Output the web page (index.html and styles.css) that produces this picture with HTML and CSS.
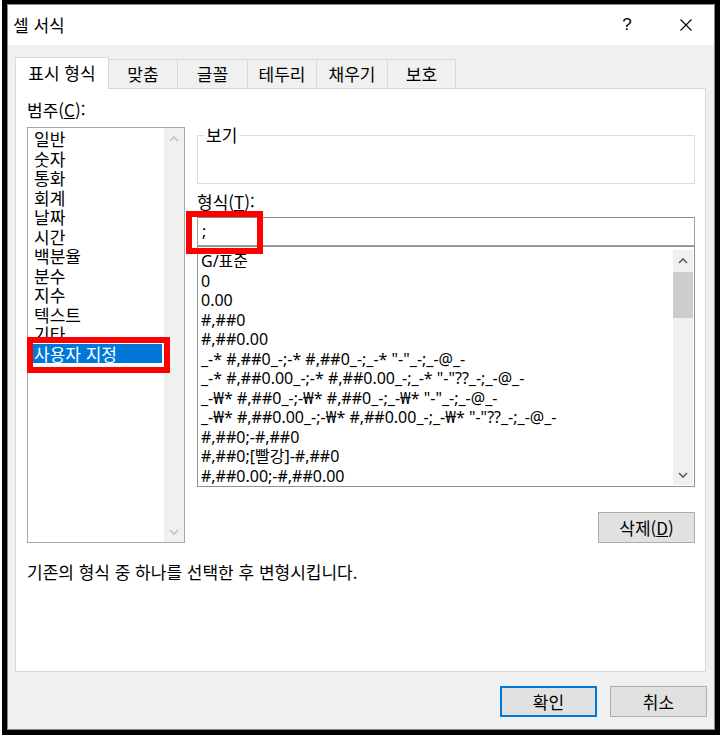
FILE: index.html
```html
<!DOCTYPE html>
<html lang="ko">
<head>
<meta charset="utf-8">
<title>셀 서식</title>
<link rel="stylesheet" href="styles.css">
</head>
<body>
<div class="frame">
  <div class="dialog">
    <div class="titlebar">
      <span class="title">셀 서식</span>
      <div class="tb-buttons">
        <span class="tb-btn help">?</span>
        <span class="tb-btn close">
          <svg width="12" height="12" viewBox="0 0 12 12"><path d="M0.5 0.5 L11.5 11.5 M11.5 0.5 L0.5 11.5" stroke="#000" stroke-width="1.1" fill="none"/></svg>
        </span>
      </div>
    </div>
    <div class="content">
      <div class="tabs">
        <div class="tab active t1">표시 형식</div>
        <div class="tab t2">맞춤</div>
        <div class="tab t3">글꼴</div>
        <div class="tab t4">테두리</div>
        <div class="tab t5">채우기</div>
        <div class="tab t6">보호</div>
      </div>
      <div class="panel">
        <div class="cols">
          <div class="col-left">
            <div class="label">범주(<u>C</u>):</div>
            <div class="listbox cat">
              <ul class="items">
                <li>일반</li>
                <li>숫자</li>
                <li>통화</li>
                <li>회계</li>
                <li>날짜</li>
                <li>시간</li>
                <li>백분율</li>
                <li>분수</li>
                <li>지수</li>
                <li>텍스트</li>
                <li>기타</li>
                <li class="selected">사용자 지정</li>
              </ul>
              <div class="vscroll disabled">
                <span class="arrow"><svg width="10" height="7" viewBox="0 0 10 7"><polyline points="1,6 5,2 9,6" fill="none" stroke="#c2c2c2" stroke-width="1.6"/></svg></span>
                <span class="track"></span>
                <span class="arrow"><svg width="10" height="7" viewBox="0 0 10 7"><polyline points="1,1 5,5 9,1" fill="none" stroke="#c2c2c2" stroke-width="1.6"/></svg></span>
              </div>
            </div>
          </div>
          <div class="col-right">
            <fieldset class="preview">
              <legend>보기</legend>
              <div class="preview-body"></div>
            </fieldset>
            <div class="label fmt-label">형식(<u>T</u>):</div>
            <div class="input">;</div>
            <div class="listbox fmt">
              <ul class="items latin">
                <li>G/표준</li>
                <li>0</li>
                <li>0.00</li>
                <li>#,##0</li>
                <li>#,##0.00</li>
                <li>_-* #,##0_-;-* #,##0_-;_-* "-"_-;_-@_-</li>
                <li>_-* #,##0.00_-;-* #,##0.00_-;_-* "-"??_-;_-@_-</li>
                <li>_-₩* #,##0_-;-₩* #,##0_-;_-₩* "-"_-;_-@_-</li>
                <li>_-₩* #,##0.00_-;-₩* #,##0.00_-;_-₩* "-"??_-;_-@_-</li>
                <li>#,##0;-#,##0</li>
                <li>#,##0;[빨강]-#,##0</li>
                <li>#,##0.00;-#,##0.00</li>
              </ul>
              <div class="vscroll">
                <span class="arrow"><svg width="10" height="7" viewBox="0 0 10 7"><polyline points="1,6 5,2 9,6" fill="none" stroke="#606060" stroke-width="1.6"/></svg></span>
                <span class="track"><span class="thumb"></span></span>
                <span class="arrow"><svg width="10" height="7" viewBox="0 0 10 7"><polyline points="1,1 5,5 9,1" fill="none" stroke="#606060" stroke-width="1.6"/></svg></span>
              </div>
            </div>
            <div class="btnrow">
              <button class="btn">삭제(<u>D</u>)</button>
            </div>
          </div>
        </div>
        <p class="hint">기존의 형식 중 하나를 선택한 후 변형시킵니다.</p>
      </div>
      <div class="footer">
        <button class="btn primary">확인</button>
        <button class="btn">취소</button>
      </div>
    </div>
  </div>
</div>
<div class="redbox rb-cat"></div>
<div class="redbox rb-input"></div>
</body>
</html>
```

FILE: styles.css
```css
* { box-sizing: border-box; }

html, body {
  margin: 0;
  padding: 0;
  background: #ffffff;
}

body {
  font-family: "Noto Sans CJK KR", "Noto Sans", sans-serif;
  font-size: 17px;
  color: #000;
  width: 723px;
  height: 737px;
  overflow: hidden;
}

.frame {
  margin-left: 2px;
  width: 718px;
  height: 735px;
  border-style: solid;
  border-color: #000;
  border-width: 4px 5px 5px 5px;
}

.dialog {
  height: 100%;
  border: 1px solid #8c8c8c;
  display: flex;
  flex-direction: column;
  background: #f0f0f0;
}

.titlebar {
  height: 40px;
  background: #fff;
  display: flex;
  align-items: center;
  padding-left: 5px;
}

.title {
  font-size: 17px;
  line-height: 20px;
  flex: 1;
}

.tb-buttons {
  display: flex;
  align-items: center;
}

.tb-btn {
  width: 46px;
  height: 30px;
  display: flex;
  align-items: center;
  justify-content: center;
}

.help {
  margin-right: 13px;
  font-family: "Liberation Sans", sans-serif;
  font-size: 17px;
}

.close { margin-right: 5px; }

.content {
  flex: 1;
  padding: 12px 8px 0 7px;
  display: flex;
  flex-direction: column;
}

.tabs {
  display: flex;
  align-items: flex-end;
  height: 31px;
}

.tab {
  height: 29px;
  border: 1px solid #d9d9d9;
  border-bottom: none;
  margin-left: -1px;
  display: flex;
  align-items: center;
  justify-content: center;
  font-size: 17px;
  line-height: 20px;
  background: #f0f0f0;
}

.tab.active {
  height: 32px;
  margin-left: 0;
  margin-bottom: -1px;
  background: #fff;
  position: relative;
  z-index: 1;
  padding-bottom: 2px;
}

.t1 { width: 94px; }
.t2 { width: 70px; }
.t3 { width: 71px; }
.t4 { width: 70px; }
.t5 { width: 72px; }
.t6 { width: 69px; }

.panel {
  width: 691px;
  height: 584px;
  border: 1px solid #d9d9d9;
  background: #fff;
  padding: 11px 10px 0 11px;
}

.cols {
  display: flex;
  gap: 12px;
}

.col-left { width: 158px; }
.col-right { width: 498px; }

.label {
  line-height: 20px;
  height: 20px;
}

.label u { text-decoration-thickness: 1px; }

.listbox {
  border: 1px solid #a6a6a6;
  background: #fff;
  display: flex;
}

.listbox.cat {
  margin-top: 7px;
  height: 416px;
}

.items {
  list-style: none;
  margin: 0;
  padding: 1px 0 0 5px;
  flex: 1;
}

.items li {
  line-height: 19.5px;
  height: 19.5px;
  white-space: nowrap;
  padding-left: 1px;
}

.items li.selected {
  background: #0078d7;
  color: #fff;
  width: 129px;
}

.vscroll {
  width: 20px;
  background: #f0f0f0;
  display: flex;
  flex-direction: column;
}

.arrow {
  height: 20px;
  display: flex;
  align-items: center;
  justify-content: center;
}

.track {
  flex: 1;
  display: flex;
  flex-direction: column;
}

.thumb {
  height: 46px;
  margin-top: 2px;
  background: #cdcdcd;
}

.preview {
  margin: 26px 0 0 0;
  padding: 0 0 0 6px;
  border: 1px solid #dcdcdc;
  min-width: 0;
}

.preview legend {
  padding: 0 2px;
  line-height: 18px;
  font-size: 17px;
}

.preview-body { height: 39px; }

.fmt-label { margin-top: 8px; }

.input {
  margin-top: 5px;
  height: 29px;
  border: 1px solid #a0a0a0;
  border-top-color: #8a8a8a;
  padding-left: 4px;
  line-height: 26px;
  font-family: "Noto Sans", sans-serif;
  font-size: 16px;
}

.listbox.fmt {
  height: 241px;
  border-color: #8e9299;
}

.listbox.fmt .items {
  padding: 5px 0 0 2px;
}

.latin {
  font-family: "Noto Sans", "Noto Sans CJK KR", sans-serif;
  font-size: 16px;
}

.listbox.fmt .vscroll {
  margin: 3px 1px 1px 0;
}

.btnrow {
  margin-top: 25px;
  display: flex;
  justify-content: flex-end;
}

.btn {
  width: 97px;
  height: 31px;
  border: 1px solid #adadad;
  background: #e1e1e1;
  font-family: "Noto Sans CJK KR", sans-serif;
  font-size: 17px;
  color: #000;
  padding: 0;
  line-height: 20px;
}

.btn.primary {
  border: 2px solid #0078d7;
}

.hint {
  margin: 19px 0 0 0;
  line-height: 20px;
}

.footer {
  margin-top: 14px;
  margin-right: -1px;
  display: flex;
  justify-content: flex-end;
  gap: 13px;
}

.redbox {
  position: absolute;
  border: 6px solid #ff0000;
}

.rb-cat {
  left: 27px;
  top: 337px;
  width: 143px;
  height: 36px;
}

.rb-input {
  left: 186px;
  top: 211px;
  width: 77px;
  height: 43px;
}
```
